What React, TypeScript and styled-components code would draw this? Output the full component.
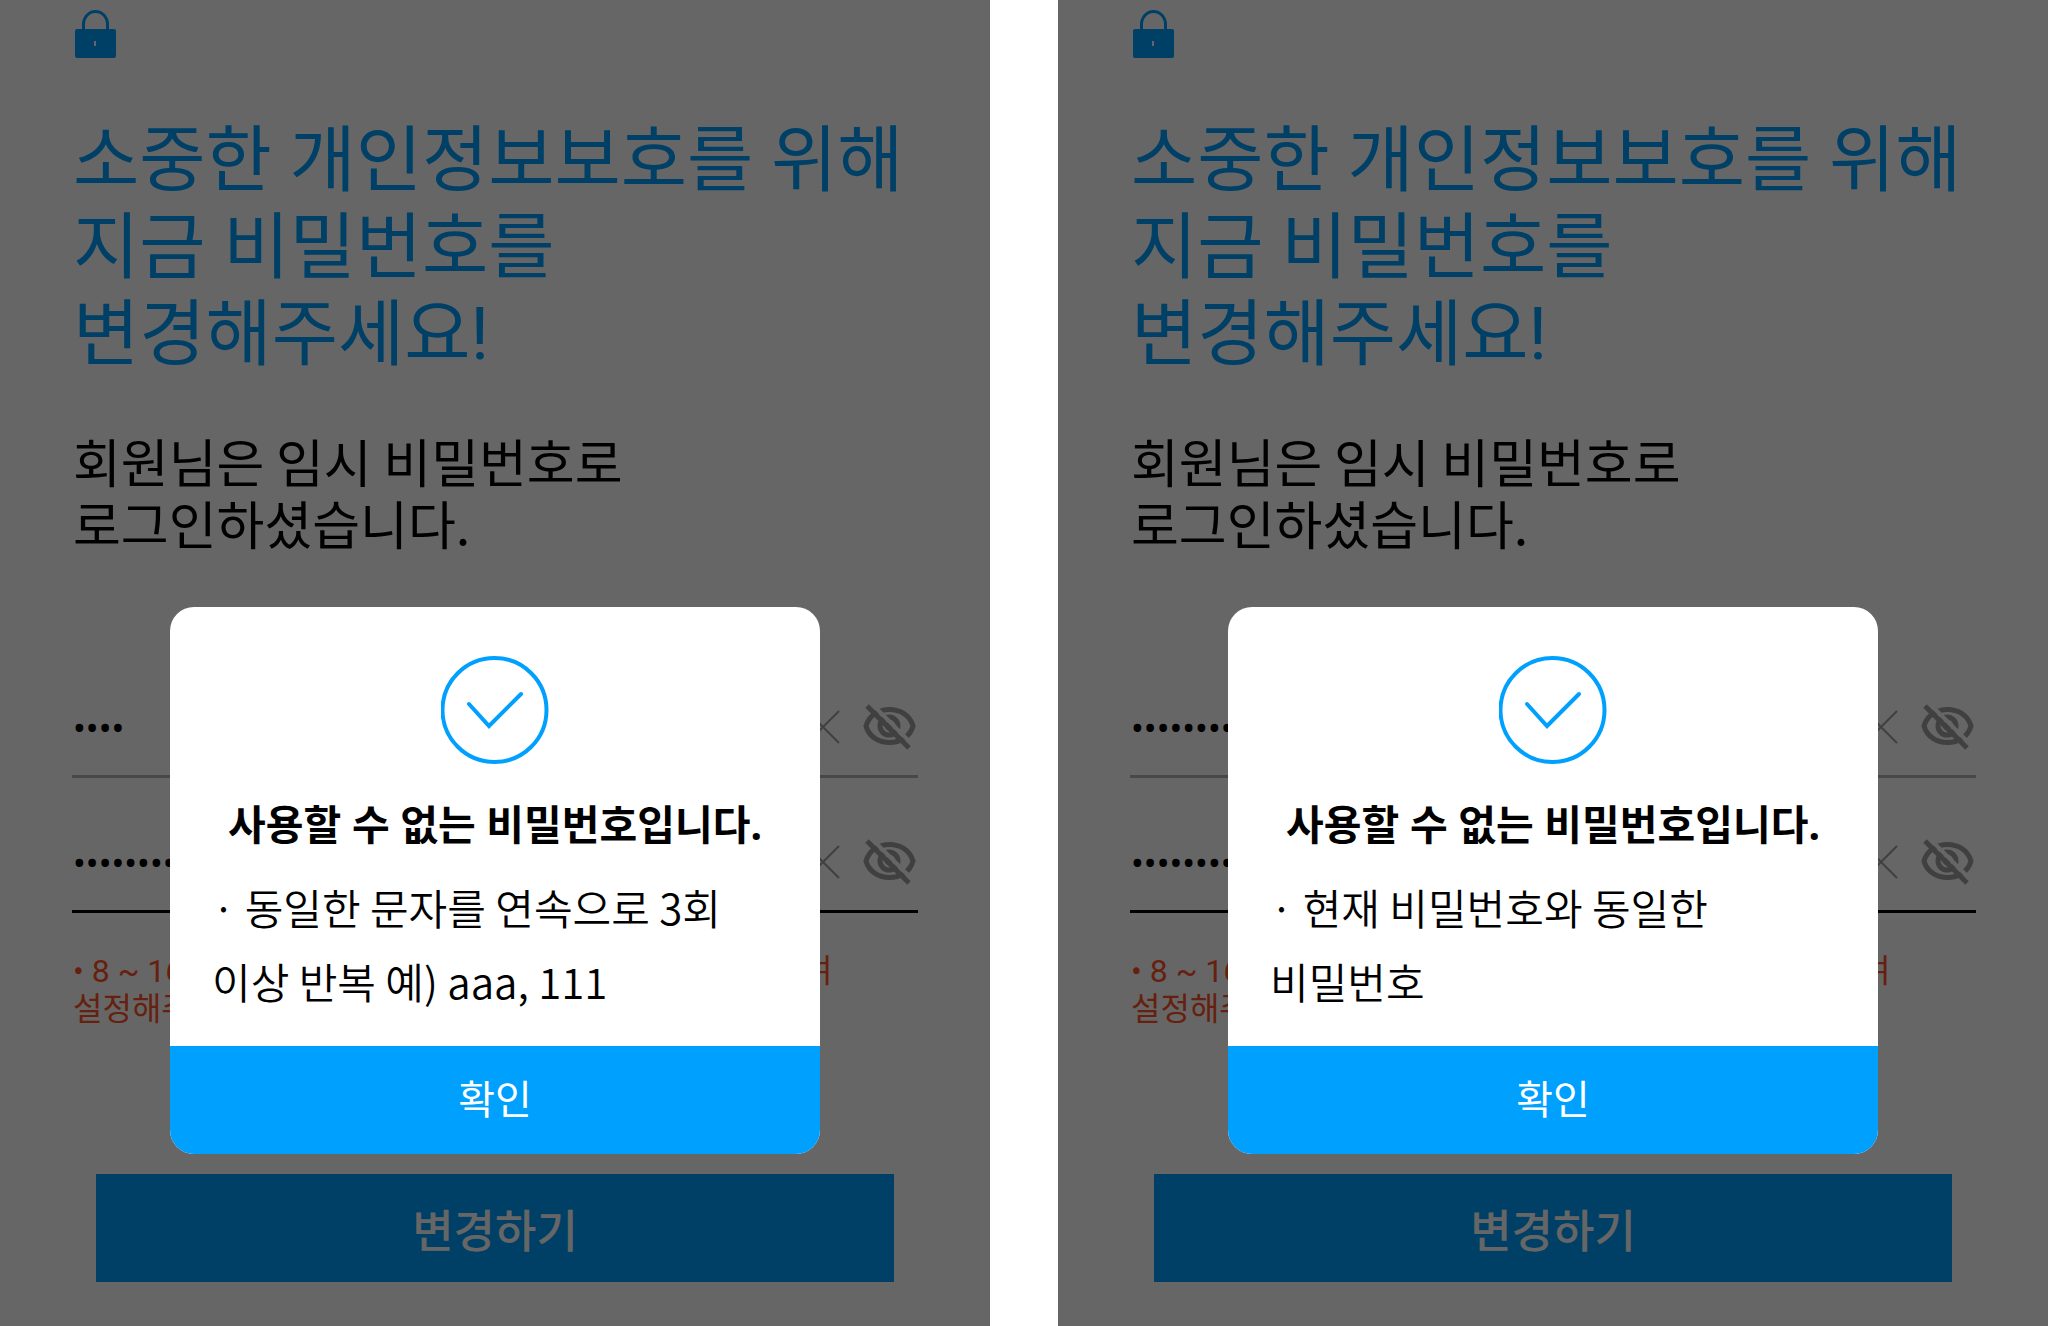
import React, { useId } from "react";
import styled, { createGlobalStyle } from "styled-components";

const GlobalStyle = createGlobalStyle`
  *, *::before, *::after { box-sizing: border-box; }
  body {
    margin: 0;
    background: #fff;
    color: #000;
    font-family: "Noto Sans CJK KR", sans-serif;
    word-break: keep-all;
  }
  h1, h2, p { margin: 0; }
  button { border: 0; margin: 0; padding: 0; background: none; font: inherit; cursor: pointer; }
`;

const Page = styled.div`
  display: grid;
  grid-template-columns: 1fr 1fr;
  gap: 68px;
  min-height: 100vh;
`;

const Screen = styled.section`
  position: relative;
  display: flex;
  flex-direction: column;
  padding: 9px 72px 44px;
  background: #fff;
`;

const Heading = styled.h1`
  margin-top: 58px;
  padding-left: 1px;
  color: #00a0ff;
  font-family: Roboto, "Noto Sans CJK KR", sans-serif;
  font-size: 72px;
  font-weight: 400;
  line-height: 87px;
  white-space: nowrap;
`;

const Lead = styled.p`
  margin-top: 52px;
  padding-left: 1px;
  font-size: 52px;
  line-height: 62px;
`;

const Form = styled.form`
  display: flex;
  flex-direction: column;
  flex: 1;
  margin-top: 124px;
`;

const Field = styled.div<{ $active?: boolean }>`
  display: flex;
  align-items: center;
  gap: 23px;
  height: 100px;
  margin-bottom: 35px;
  padding-right: 1px;
  border-bottom: 3px solid ${(p) => (p.$active ? "#000" : "#b4b4b4")};
`;

const PasswordInput = styled.input`
  flex: 1;
  min-width: 0;
  height: 60px;
  padding: 4px 0 0 1px;
  border: 0;
  outline: 0;
  background: none;
  color: #000;
  font-family: Roboto, sans-serif;
  font-size: 38px;
`;

const IconButton = styled.button`
  display: flex;
`;

const Hint = styled.p`
  margin-top: 4px;
  padding-left: 1px;
  color: #ff5028;
  font-family: Roboto, "Noto Sans CJK KR", sans-serif;
  font-size: 32px;
  line-height: 38px;
  white-space: nowrap;
`;

const SubmitButton = styled.button`
  height: 108px;
  margin: auto 24px 0;
  background: #00a0ff;
  color: #fff;
  font-size: 45px;
  font-weight: 500;
`;

const Overlay = styled.div`
  position: absolute;
  inset: 0;
  display: flex;
  justify-content: center;
  align-items: flex-start;
  padding: 607px 170px 0;
  background: rgba(0, 0, 0, 0.6);
`;

const Dialog = styled.div`
  flex: 1;
  display: flex;
  flex-direction: column;
  align-items: center;
  padding-top: 49px;
  border-radius: 24px;
  overflow: hidden;
  background: #fff;
`;

const DialogTitle = styled.h2`
  margin-top: 30px;
  font-family: "Noto Sans", "Noto Sans CJK KR", sans-serif;
  font-size: 41px;
  font-weight: 700;
  line-height: 60px;
  white-space: nowrap;
`;

const DialogText = styled.p`
  align-self: stretch;
  margin: 16px 0 28px;
  padding: 0 42px;
  font-size: 42px;
  font-weight: 350;
  line-height: 74px;
`;

const ConfirmButton = styled.button`
  align-self: stretch;
  height: 108px;
  padding-bottom: 6px;
  background: #00a0ff;
  color: #fff;
  font-size: 40px;
`;

function LockIcon() {
  return (
    <svg width="45" height="50" viewBox="0 0 45 50" fill="none" aria-hidden="true">
      <path d="M11.500 21V15.500a12 13 0 0 1 24 0V21" stroke="#00a0ff" strokeWidth="3" />
      <rect x="3" y="20" width="41" height="29" rx="2" fill="#00a0ff" />
      <path d="M23 32v5" stroke="#fff" strokeWidth="2" />
    </svg>
  );
}

function ClearIcon() {
  return (
    <svg width="34" height="34" viewBox="0 0 34 34" fill="none" stroke="#a0a0a0" strokeWidth="2" aria-hidden="true">
      <path d="M1 1l32 32M33 1L1 33" />
    </svg>
  );
}

function EyeOffIcon() {
  const maskId = useId();
  return (
    <svg width="54" height="46" viewBox="0 0 54 46" fill="none" stroke="#a0a0a0" strokeWidth="5" aria-hidden="true">
      <mask id={maskId} maskUnits="userSpaceOnUse" x="0" y="0" width="54" height="46">
        <rect width="54" height="46" fill="#fff" stroke="none" />
        <path d="M7-2l44 44" stroke="#000" strokeWidth="4" />
      </mask>
      <g mask={`url(#${maskId})`}>
        <path d="M3 22C9 0 44 0 50 22 44 44 9 44 3 22Z" />
        <circle cx="26" cy="22" r="9" />
        <circle cx="26" cy="22" r="4" fill="#a0a0a0" stroke="none" />
      </g>
      <path d="M4 2l42 42" />
    </svg>
  );
}

function CheckIcon() {
  return (
    <svg width="108" height="108" viewBox="0 0 108 108" fill="none" stroke="#00a0ff" strokeWidth="4" aria-hidden="true">
      <circle cx="53.500" cy="54" r="52" />
      <path d="M28 48l20 22 32-32" strokeLinecap="round" />
    </svg>
  );
}

function PasswordField({ label, value, active }: { label: string; value: string; active?: boolean }) {
  return (
    <Field $active={active}>
      <PasswordInput aria-label={label} type="password" defaultValue={value} autoComplete="off" />
      <IconButton type="button" aria-label="지우기">
        <ClearIcon />
      </IconButton>
      <IconButton type="button" aria-label="비밀번호 표시">
        <EyeOffIcon />
      </IconButton>
    </Field>
  );
}

interface PasswordScreenProps {
  password: string;
  confirmation: string;
  reason: React.ReactNode;
}

function PasswordScreen({ password, confirmation, reason }: PasswordScreenProps) {
  const titleId = useId();
  return (
    <Screen>
      <LockIcon />
      <Heading>
        소중한 개인정보보호를 위해
        <br />
        지금 비밀번호를
        <br />
        변경해주세요!
      </Heading>
      <Lead>
        회원님은 임시 비밀번호로
        <br />
        로그인하셨습니다.
      </Lead>
      <Form onSubmit={(e) => e.preventDefault()}>
        <PasswordField label="새 비밀번호" value={password} />
        <PasswordField label="새 비밀번호 확인" value={confirmation} active />
        <Hint>
          • 8 ~ 16자리의 영문 대 소문자, 숫자, 특수문자를 조합하여
          <br />
          설정해주세요.
        </Hint>
        <SubmitButton type="submit">변경하기</SubmitButton>
      </Form>
      <Overlay>
        <Dialog role="alertdialog" aria-labelledby={titleId}>
          <CheckIcon />
          <DialogTitle id={titleId}>사용할 수 없는 비밀번호입니다.</DialogTitle>
          <DialogText>{reason}</DialogText>
          <ConfirmButton type="button">확인</ConfirmButton>
        </Dialog>
      </Overlay>
    </Screen>
  );
}

export default function App() {
  return (
    <>
      <GlobalStyle />
      <Page>
        <PasswordScreen
          password="aaa1"
          confirmation="aaaa1111"
          reason={
            <>
              · 동일한 문자를 연속으로 3회
              <br />
              이상 반복 예) aaa, 111
            </>
          }
        />
        <PasswordScreen
          password="abcd1234"
          confirmation="abcd1234"
          reason={
            <>
              · 현재 비밀번호와 동일한
              <br />
              비밀번호
            </>
          }
        />
      </Page>
    </>
  );
}
